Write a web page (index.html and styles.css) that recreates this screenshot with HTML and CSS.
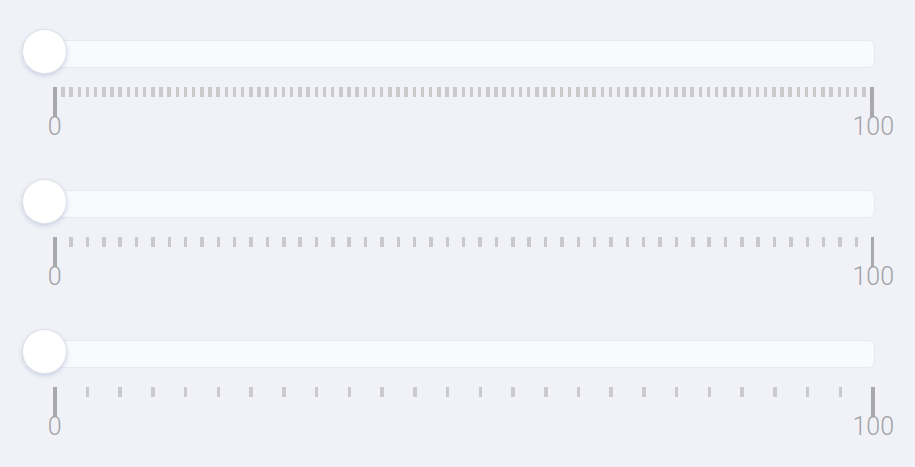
FILE: index.html
```html
<!DOCTYPE html>
<html>
<head>
<meta charset="utf-8">
<link rel="stylesheet" href="styles.css">
</head>
<body>
<div class="page">
  <div class="slider">
    <div class="rail"><div class="track"></div><div class="thumb"></div></div>
    <div class="scale">
      <div class="ticks">
        <i class="b"></i>
        <i></i><i></i><i></i><i></i><i></i><i></i><i></i><i></i><i></i><i></i>
        <i></i><i></i><i></i><i></i><i></i><i></i><i></i><i></i><i></i><i></i>
        <i></i><i></i><i></i><i></i><i></i><i></i><i></i><i></i><i></i><i></i>
        <i></i><i></i><i></i><i></i><i></i><i></i><i></i><i></i><i></i><i></i>
        <i></i><i></i><i></i><i></i><i></i><i></i><i></i><i></i><i></i><i></i>
        <i></i><i></i><i></i><i></i><i></i><i></i><i></i><i></i><i></i><i></i>
        <i></i><i></i><i></i><i></i><i></i><i></i><i></i><i></i><i></i><i></i>
        <i></i><i></i><i></i><i></i><i></i><i></i><i></i><i></i><i></i><i></i>
        <i></i><i></i><i></i><i></i><i></i><i></i><i></i><i></i><i></i><i></i>
        <i></i><i></i><i></i><i></i><i></i><i></i><i></i><i></i><i></i>
        <i class="b"></i>
      </div>
      <div class="labels"><span>0</span><span>100</span></div>
    </div>
  </div>
  <div class="slider">
    <div class="rail"><div class="track"></div><div class="thumb"></div></div>
    <div class="scale">
      <div class="ticks">
        <i class="b"></i>
        <i></i><i></i><i></i><i></i><i></i><i></i><i></i><i></i><i></i><i></i>
        <i></i><i></i><i></i><i></i><i></i><i></i><i></i><i></i><i></i><i></i>
        <i></i><i></i><i></i><i></i><i></i><i></i><i></i><i></i><i></i><i></i>
        <i></i><i></i><i></i><i></i><i></i><i></i><i></i><i></i><i></i><i></i>
        <i></i><i></i><i></i><i></i><i></i><i></i><i></i><i></i><i></i>
        <i class="b"></i>
      </div>
      <div class="labels"><span>0</span><span>100</span></div>
    </div>
  </div>
  <div class="slider">
    <div class="rail"><div class="track"></div><div class="thumb"></div></div>
    <div class="scale">
      <div class="ticks">
        <i class="b"></i>
        <i></i><i></i><i></i><i></i><i></i><i></i><i></i><i></i><i></i><i></i>
        <i></i><i></i><i></i><i></i><i></i><i></i><i></i><i></i><i></i><i></i>
        <i></i><i></i><i></i><i></i>
        <i class="b"></i>
      </div>
      <div class="labels"><span>0</span><span>100</span></div>
    </div>
  </div>
</div>
</body>
</html>
```
FILE: styles.css
```css
html, body {
  margin: 0;
  padding: 0;
  background: #f1f2f7;
}
body {
  font-family: Roboto, "Liberation Sans", sans-serif;
}
.page {
  display: flex;
  flex-direction: column;
  gap: 40px;
  padding: 29px 0 0 22px;
}
.slider {
  width: 853px;
  display: flex;
  flex-direction: column;
}
.rail {
  position: relative;
  height: 47px;
}
.track {
  margin-top: 11px;
  height: 26px;
  background: #f9fafd;
  border: 1px solid #e8e9f0;
  border-radius: 7px;
}
.thumb {
  position: absolute;
  left: 0;
  top: 0;
  width: 43px;
  height: 43px;
  border-radius: 50%;
  background: #ffffff;
  border: 1.5px solid #dfe1ea;
  box-shadow: 0 2px 4px rgba(160, 168, 205, 0.45);
}
.scale {
  margin-top: 11px;
  margin-left: 31px;
  width: 822px;
}
.ticks {
  height: 27px;
  display: flex;
  justify-content: space-between;
  align-items: flex-start;
}
.ticks i {
  display: block;
  width: 3.5px;
  height: 10px;
  background: #cacacd;
}
.ticks i.b {
  height: 30px;
  background: #a9a9ad;
}
.labels {
  display: flex;
  justify-content: space-between;
  height: 25px;
}
.labels span {
  width: 3.5px;
  display: flex;
  justify-content: center;
  white-space: nowrap;
  font-size: 25px;
  line-height: 25px;
  font-weight: 300;
  color: #a2a2a6;
}
```
